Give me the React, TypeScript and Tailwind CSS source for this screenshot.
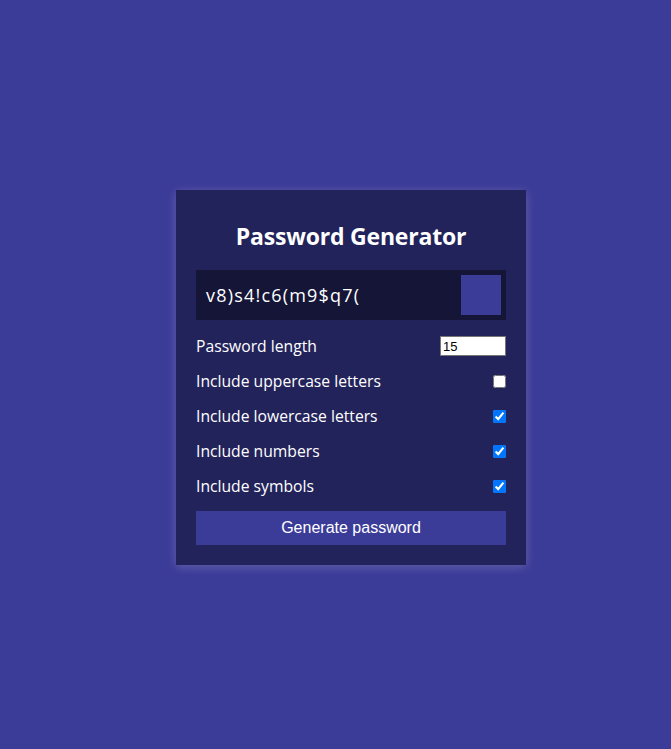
import React, { useState } from 'react';

const OPTIONS = [
  { key: 'upper', label: 'Include uppercase letters', checked: false },
  { key: 'lower', label: 'Include lowercase letters', checked: true },
  { key: 'numbers', label: 'Include numbers', checked: true },
  { key: 'symbols', label: 'Include symbols', checked: true },
];

const App: React.FC = () => {
  const [length, setLength] = useState('15');
  const [opts, setOpts] = useState<Record<string, boolean>>(
    Object.fromEntries(OPTIONS.map((o) => [o.key, o.checked]))
  );

  return (
    <div className="min-h-screen bg-[#3b3b98] flex items-center justify-center pl-[31px] font-['Open_Sans','Noto_Sans',sans-serif] text-white">
      <div className="w-[350px] bg-[#23235b] p-5 shadow-[0_2px_10px_rgba(255,255,255,0.2)] mt-[6px]">
        <h2 className="text-center text-[23px] font-bold leading-[31px] tracking-[-0.2px] mt-[11px] mb-[18px]">
          Password Generator
        </h2>

        {/* password output */}
        <div className="bg-[#151537] h-[50px] flex items-center justify-between pl-[10px] pr-[5px]">
          <span className="text-[18px] tracking-[1.2px]">v8)s4!c6(m9$q7(</span>
          <button className="w-10 h-10 bg-[#3b3b98]" aria-label="copy" />
        </div>

        {/* settings */}
        <div className="flex items-center justify-between h-5 mt-4">
          <label className="text-[15.7px] pt-[2px]">Password length</label>
          <input
            type="number"
            value={length}
            onChange={(e) => setLength(e.target.value)}
            className="w-[66px] h-5 bg-white text-black border border-[#767676] px-[2px] text-[13px] font-['Liberation_Sans',Arial,sans-serif] [appearance:textfield]"
          />
        </div>
        {OPTIONS.map((o) => (
          <div key={o.key} className="flex items-center justify-between h-5 mt-[15px]">
            <label className="text-[15.7px] pt-[2px]">{o.label}</label>
            <input
              type="checkbox"
              checked={opts[o.key]}
              onChange={() => setOpts({ ...opts, [o.key]: !opts[o.key] })}
              className="w-[13px] h-[13px]"
            />
          </div>
        ))}

        <button className="w-full h-[34px] mt-[15px] bg-[#3b3b98] text-white text-[16px] font-['Liberation_Sans',Arial,sans-serif]">
          Generate password
        </button>
      </div>
    </div>
  );
};

export default App;
